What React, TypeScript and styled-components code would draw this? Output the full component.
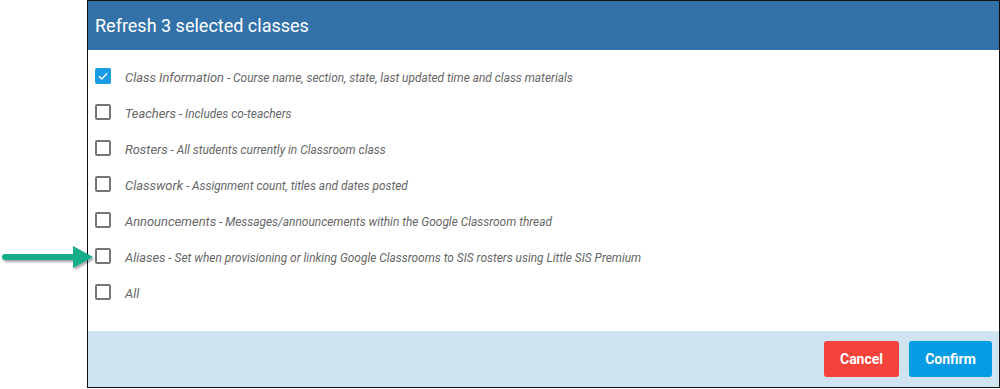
import React from 'react'
import styled, {createGlobalStyle} from 'styled-components'

const GlobalStyle = createGlobalStyle`
    html, body {
        margin: 0;
        padding: 0;
        background: #fff;
        font-family: Roboto, "Liberation Sans", sans-serif;
    }
`

interface RefreshOption {
    id: string
    label: string
    description?: string
    checked: boolean
}

const options: RefreshOption[] = [
    {id: 'info', label: 'Class Information', description: 'Course name, section, state, last updated time and class materials', checked: true},
    {id: 'teachers', label: 'Teachers', description: 'Includes co-teachers', checked: false},
    {id: 'rosters', label: 'Rosters', description: 'All students currently in Classroom class', checked: false},
    {id: 'classwork', label: 'Classwork', description: 'Assignment count, titles and dates posted', checked: false},
    {id: 'announcements', label: 'Announcements', description: 'Messages/announcements within the Google Classroom thread', checked: false},
    {id: 'aliases', label: 'Aliases', description: 'Set when provisioning or linking Google Classrooms to SIS rosters using Little SIS Premium', checked: false},
    {id: 'all', label: 'All', checked: false}
]

const Page = styled.div`
    position: relative;
    width: 1000px;
    height: 389px;
    padding-left: 87px;
    box-sizing: border-box;
`
const Dialog = styled.div`
    width: 913px;
    height: 388px;
    box-sizing: border-box;
    border: 1px solid #111;
    display: flex;
    flex-direction: column;
    background: #fff;
`
const Header = styled.div`
    height: 49px;
    background: #3371a9;
    display: flex;
    align-items: center;
    padding-left: 7px;
    color: #fff;
    font-size: 18px;
    font-weight: 400;
`
const Body = styled.div`
    flex: 1;
    padding: 8px 0 0 7px;
`
const Row = styled.label`
    height: 36px;
    display: flex;
    align-items: center;
    gap: 14px;
    color: #666;
    font-style: italic;
    font-weight: 400;
`
const Box = styled.span<{ $checked: boolean }>`
    width: 16px;
    height: 16px;
    box-sizing: border-box;
    border-radius: 2px;
    border: 2px solid ${p => (p.$checked ? '#1a9be6' : '#767676')};
    background: ${p => (p.$checked ? '#1a9be6' : '#fff')};
    display: flex;
    align-items: center;
    justify-content: center;
    flex-shrink: 0;
`
const Label = styled.span`
    font-size: 12.9px;
`
const Description = styled.span`
    font-size: 11.9px;
`
const Footer = styled.div`
    height: 56px;
    background: #cfe3f1;
    display: flex;
    justify-content: flex-end;
    align-items: center;
    gap: 10px;
    padding-right: 7px;
`
const ActionButton = styled.button<{ $color: string; $width: number }>`
    width: ${p => p.$width}px;
    height: 36px;
    border: none;
    border-radius: 3px;
    background: ${p => p.$color};
    color: #fff;
    font-family: Roboto, "Liberation Sans", sans-serif;
    font-size: 14px;
    font-weight: 700;
    padding: 0;
`
const Pointer = styled.svg`
    position: absolute;
    left: 0;
    top: 244px;
    overflow: visible;
`

const Checkbox = ({checked}: { checked: boolean }) => (
    <Box $checked={checked}>
        {checked && (
            <svg width="12" height="12" viewBox="0 0 12 12">
                <path d="M2 6.2 L4.8 9 L10.2 3.2" fill="none" stroke="#fff" strokeWidth="1.4"/>
            </svg>
        )}
    </Box>
)

export default function App() {
    return (
        <Page>
            <GlobalStyle/>
            <Dialog>
                <Header>Refresh 3 selected classes</Header>
                <Body>
                    {options.map(item => (
                        <Row key={item.id}>
                            <Checkbox checked={item.checked}/>
                            <span>
                                <Label>{item.label}</Label>
                                {item.description && <Description> - {item.description}</Description>}
                            </span>
                        </Row>
                    ))}
                </Body>
                <Footer>
                    <ActionButton $color="#f5423a" $width={75}>Cancel</ActionButton>
                    <ActionButton $color="#069ce4" $width={83}>Confirm</ActionButton>
                </Footer>
            </Dialog>
            <Pointer width="96" height="28" viewBox="0 0 96 28">
                <defs>
                    <filter id="shade" x="-10%" y="-30%" width="130%" height="180%">
                        <feDropShadow dx="1.5" dy="2" stdDeviation="1.2" floodColor="#000" floodOpacity="0.35"/>
                    </filter>
                </defs>
                <g filter="url(#shade)">
                    <rect x="2" y="10" width="74" height="6" rx="3" fill="#12ae8a"/>
                    <path d="M73 2 L93 13 L73 24 Z" fill="#12ae8a"/>
                </g>
            </Pointer>
        </Page>
    )
}
